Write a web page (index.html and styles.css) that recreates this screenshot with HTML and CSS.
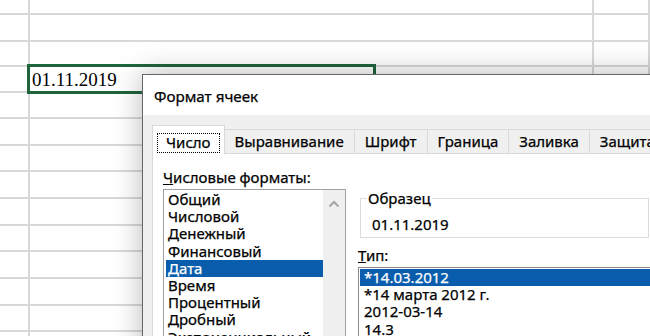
FILE: index.html
```html
<!DOCTYPE html>
<html lang="ru">
<head>
    <meta charset="UTF-8">
    <meta name="viewport" content="width=device-width, initial-scale=1.0">
    <title>Формат ячеек</title>
    <link rel="stylesheet" href="styles.css">
</head>
<body>

    <div class="sheet">
        <div class="cell"></div><div class="cell"></div><div class="cell"></div>
        <div class="cell"></div><div class="cell"></div><div class="cell"></div>
        <div class="cell"></div><div class="cell"></div><div class="cell"></div>
        <div class="cell"></div><div class="cell"></div><div class="cell"></div>
        <div class="cell"></div><div class="cell"></div><div class="cell"></div>
        <div class="cell"></div><div class="cell"></div><div class="cell"></div>
        <div class="cell"></div><div class="cell"></div><div class="cell"></div>
        <div class="cell"></div><div class="cell"></div><div class="cell"></div>
        <div class="cell"></div><div class="cell"></div><div class="cell"></div>
        <div class="cell"></div><div class="cell"></div><div class="cell"></div>
        <div class="cell"></div><div class="cell"></div><div class="cell"></div>
        <div class="cell"></div><div class="cell"></div><div class="cell"></div>
        <div class="cell"></div><div class="cell"></div><div class="cell"></div>
        <div class="cell"></div><div class="cell"></div><div class="cell"></div>
    </div>

    <div class="active-cell">01.11.2019</div>

    <div class="dialog">
        <div class="dialog-title">Формат ячеек</div>
        <div class="dialog-body">
            <div class="tabs">
                <div class="tab active"><span class="focus">Число</span></div>
                <div class="tab">Выравнивание</div>
                <div class="tab">Шрифт</div>
                <div class="tab">Граница</div>
                <div class="tab">Заливка</div>
                <div class="tab">Защита</div>
            </div>
            <div class="tab-page">
                <div class="col-left">
                    <div class="label"><u>Ч</u>исловые форматы:</div>
                    <div class="listbox">
                        <ul class="items">
                            <li>Общий</li>
                            <li>Числовой</li>
                            <li>Денежный</li>
                            <li>Финансовый</li>
                            <li class="selected">Дата</li>
                            <li>Время</li>
                            <li>Процентный</li>
                            <li>Дробный</li>
                            <li>Экспоненциальный</li>
                        </ul>
                        <div class="scrollbar">
                            <svg width="12" height="8" viewBox="0 0 12 8">
                                <path d="M1.5 6.5 L6 2 L10.5 6.5" fill="none" stroke="#a6a6a6" stroke-width="2"/>
                            </svg>
                        </div>
                    </div>
                </div>
                <div class="col-right">
                    <fieldset class="sample">
                        <legend>Образец</legend>
                        <div class="sample-value">01.11.2019</div>
                    </fieldset>
                    <div class="label"><u>Т</u>ип:</div>
                    <div class="listbox type-list">
                        <ul class="items">
                            <li class="selected">*14.03.2012</li>
                            <li>*14 марта 2012 г.</li>
                            <li>2012-03-14</li>
                            <li>14.3</li>
                        </ul>
                    </div>
                </div>
            </div>
        </div>
    </div>

</body>
</html>
```
FILE: styles.css
```css
html, body {
    margin: 0;
    height: 100%;
    overflow: hidden;
    background-color: #ffffff;
}

body {
    position: relative;
    font-family: 'Noto Sans', 'Segoe UI', sans-serif;
    color: #000;
}

/* spreadsheet grid */
.sheet {
    display: grid;
    grid-template-columns: 30px 564px 1fr;
    grid-template-rows: 15px 27px 25px 26px 26px;
    grid-auto-rows: 26.67px;
}

.cell {
    box-sizing: border-box;
    border-right: 2px solid #d8d8d8;
    border-bottom: 2px solid #d8d8d8;
}

.active-cell {
    position: absolute;
    left: 27px;
    top: 64px;
    width: 341px;
    height: 24px;
    border: 3px solid #1f643c;
    padding-left: 2px;
    font-family: 'Liberation Serif', 'Times New Roman', serif;
    font-size: 19px;
    line-height: 26px;
}

/* dialog window */
.dialog {
    position: absolute;
    left: 142px;
    top: 74px;
    width: 620px;
    height: 320px;
    background-color: #f0f0f0;
    border: 1px solid #666666;
    box-shadow: 0 0 28px rgba(0, 0, 0, 0.28);
    font-size: 15px;
    -webkit-text-stroke: 0.25px #000;
}

.dialog-title {
    height: 40px;
    line-height: 43px;
    padding-left: 11px;
    background-color: #ffffff;
    font-size: 15.2px;
}

.dialog-body {
    padding: 10px 0 0 9px;
}

.tabs {
    display: flex;
    align-items: flex-end;
    height: 28px;
}

.tab {
    box-sizing: border-box;
    height: 24px;
    line-height: 22px;
    padding: 0 10px;
    margin-right: -1px;
    border: 1px solid #d9d9d9;
    border-bottom: none;
    background-color: #f0f0f0;
    white-space: nowrap;
}

.tab.active {
    position: relative;
    z-index: 1;
    height: 29px;
    margin-bottom: -1px;
    padding: 5px 4px 0;
    background-color: #ffffff;
}

.focus {
    display: inline-block;
    padding: 0 8px;
    height: 18px;
    line-height: 17px;
    border: 1px dotted #000;
    -webkit-text-stroke: 0.25px #000;
}

.tab-page {
    display: flex;
    height: 200px;
    padding: 14px 0 0 10px;
    background-color: #ffffff;
    border: 1px solid #d9d9d9;
}

.label {
    height: 18px;
    line-height: 18px;
}

.listbox {
    position: relative;
    margin-top: 3px;
    border: 1px solid #a0a0a0;
    background-color: #ffffff;
    height: 200px;
    overflow: hidden;
}

.items {
    list-style: none;
    margin: 0;
    padding: 1px 0 0 2px;
}

.items li {
    height: 17.2px;
    line-height: 17px;
    padding-left: 2px;
    white-space: nowrap;
}

.items li.selected {
    background-color: #0a5dac;
    color: #ffffff;
    -webkit-text-stroke: 0.25px #ffffff;
}

.col-left {
    width: 183px;
}

.col-left .items {
    margin-right: 22px;
}

.scrollbar {
    position: absolute;
    top: 0;
    right: 0;
    bottom: 0;
    width: 22px;
    background-color: #f0f0f0;
    display: flex;
    justify-content: center;
    padding-top: 10px;
    box-sizing: border-box;
}

.col-right {
    flex: 1;
    margin-left: 12px;
    padding-top: 21px;
}

.sample {
    margin: 0;
    padding: 8px 0 4px 11px;
    border: 1px solid #dcdcdc;
    width: 276px;
    margin-left: 2px;
}

.sample legend {
    padding: 0 1px;
    margin-left: -5px;
    line-height: 18px;
}

.sample-value {
    line-height: 18px;
}

.col-right .label {
    margin-top: 8px;
}

.type-list {
    border-color: #8a8a8a;
    border-right: none;
}

.type-list .items {
    padding-left: 1px;
}

.type-list .items li {
    padding-left: 4px;
}
```
